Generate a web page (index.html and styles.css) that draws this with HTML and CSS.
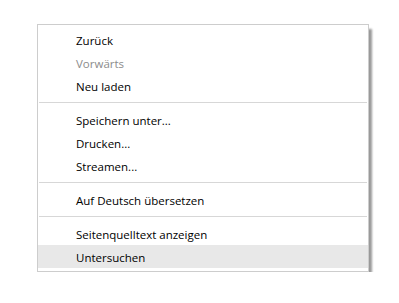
FILE: index.html
```html
<!DOCTYPE html>
<html lang="de">
<head>
  <meta charset="UTF-8">
  <title>Kontextmenü</title>
  <link rel="stylesheet" href="styles.css">
</head>
<body>
<div class="menu">
  <div class="item">Zurück</div>
  <div class="item disabled">Vorwärts</div>
  <div class="item">Neu laden</div>
  <div class="sep"></div>
  <div class="item">Speichern unter...</div>
  <div class="item">Drucken...</div>
  <div class="item">Streamen...</div>
  <div class="sep"></div>
  <div class="item">Auf Deutsch übersetzen</div>
  <div class="sep"></div>
  <div class="item">Seitenquelltext anzeigen</div>
  <div class="item hover">Untersuchen</div>
</div>
</body>
</html>
```

FILE: styles.css
```css
body{
  margin: 0;
  background: #fff;
  font-family: "Open Sans", "Noto Sans", sans-serif;
  font-size: 11.5px;
  color: #000;
}
.menu{
  width: 330px;
  margin: 24px 0 0 37px;
  padding: 3px 0;
  border: 1px solid #cdcdcd;
  background: #fff;
  box-shadow: 4px 4px 2px -1px rgba(0,0,0,.4);
}
.item{
  height: 21px;
  line-height: 21px;
  padding: 2px 0 0 38px;
  white-space: nowrap;
}
.item.disabled{
  color: #8c8c8c;
}
.item.hover{
  background: #e8e8e8;
}
.sep{
  height: 1px;
  margin: 5px 1px;
  background: #d7d7d7;
}
```
